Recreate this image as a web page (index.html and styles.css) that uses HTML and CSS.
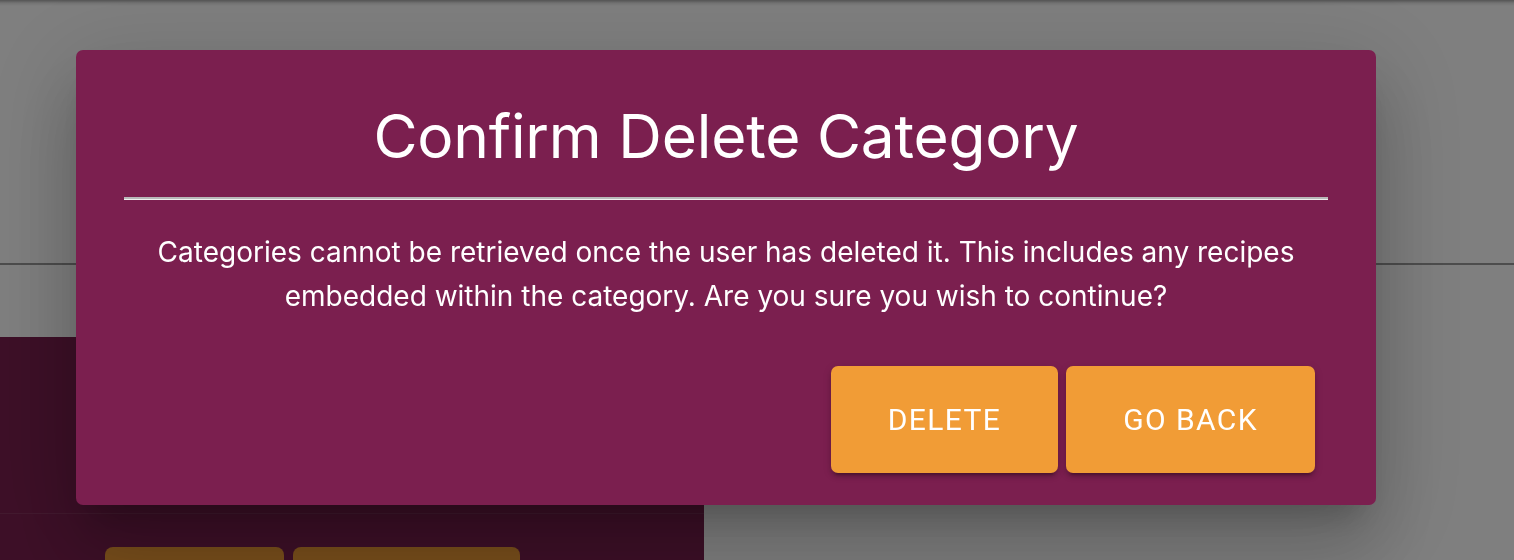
FILE: index.html
```html
<!DOCTYPE html>
<html lang="en">
<head>
<meta charset="utf-8">
<title>Confirm Delete Category</title>
<link rel="stylesheet" href="styles.css">
</head>
<body>
<div class="page">
  <header class="topbar"></header>
  <main class="content">
    <section class="card">
      <div class="card-body"></div>
      <div class="card-actions">
        <div class="card-btn card-btn--a"></div>
        <div class="card-btn card-btn--b"></div>
      </div>
    </section>
  </main>
</div>

<div class="backdrop">
  <div class="dialog" role="dialog" aria-labelledby="dlg-title">
    <h2 class="dialog-title" id="dlg-title">Confirm Delete Category</h2>
    <hr class="dialog-rule">
    <p class="dialog-text">Categories cannot be retrieved once the user has deleted it. This includes any recipes embedded within the category. Are you sure you wish to continue?</p>
    <div class="dialog-actions">
      <button class="btn" type="button">DELETE</button>
      <button class="btn" type="button">GO BACK</button>
    </div>
  </div>
</div>
</body>
</html>
```

FILE: styles.css
```css
html, body {
  margin: 0;
  padding: 0;
  height: 100%;
  overflow: hidden;
  background: #ffffff;
  font-family: "Inter", "Noto Sans", "Liberation Sans", sans-serif;
}

.page {
  display: flex;
  flex-direction: column;
}

.topbar {
  height: 263px;
  background: linear-gradient(to bottom, #a8a8a8 0, #e6e6e6 3px, #ffffff 6px);
  border-bottom: 2px solid #9a9a9a;
}

.content {
  padding-top: 72px;
}

.card {
  width: 704px;
  height: 260px;
  background: #7b1f4f;
  display: flex;
  flex-direction: column;
}

.card-body {
  height: 176px;
  flex-shrink: 0;
}

.card-actions {
  border-top: 1px solid rgba(255, 255, 255, 0.09);
  padding: 33px 0 0 105px;
  display: flex;
  gap: 9px;
  flex-shrink: 0;
}

.card-btn {
  height: 40px;
  border-radius: 8px 8px 0 0;
  background: #f19c36;
}

.card-btn--a { width: 179px; }
.card-btn--b { width: 227px; }

/* Modal overlay */
.backdrop {
  position: fixed;
  inset: 0;
  background: rgba(0, 0, 0, 0.5);
  display: flex;
  align-items: flex-start;
  padding: 50px 0 0 76px;
}

.dialog {
  width: 1300px;
  box-sizing: border-box;
  background: #7b1f4f;
  border-radius: 7px;
  padding: 46px 48px 32px;
  color: #ffffff;
  display: flex;
  flex-direction: column;
  box-shadow:
    0 22px 30px -14px rgba(0, 0, 0, 0.2),
    0 48px 76px 6px rgba(0, 0, 0, 0.14),
    0 18px 92px 16px rgba(0, 0, 0, 0.12);
}

.dialog-title {
  margin: 0;
  font-family: "Inter", "Noto Sans", sans-serif;
  font-weight: 400;
  font-size: 60.4px;
  line-height: 80px;
  text-align: center;
  letter-spacing: -0.2px;
}

.dialog-rule {
  margin: 21px 0 0;
  height: 0;
  border: 0;
  border-top: 2px solid #b9b9b9;
  border-bottom: 1px solid #efefef;
}

.dialog-text {
  margin: 30px 0 0;
  font-family: "Inter", "Noto Sans", sans-serif;
  font-size: 28px;
  line-height: 44px;
  text-align: center;
}

.dialog-actions {
  margin-top: 48px;
  display: flex;
  justify-content: flex-end;
  gap: 8px;
  padding-right: 13px;
}

.btn {
  height: 107px;
  padding: 0 57px;
  border: 0;
  border-radius: 7px;
  background: #f19c36;
  color: #ffffff;
  font-family: "Roboto", "Liberation Sans", sans-serif;
  font-weight: 400;
  font-size: 30px;
  letter-spacing: 1.4px;
  text-transform: uppercase;
  box-shadow:
    0 6px 2px -4px rgba(0, 0, 0, 0.2),
    0 4px 4px 0 rgba(0, 0, 0, 0.14),
    0 2px 10px 0 rgba(0, 0, 0, 0.12);
}
```
